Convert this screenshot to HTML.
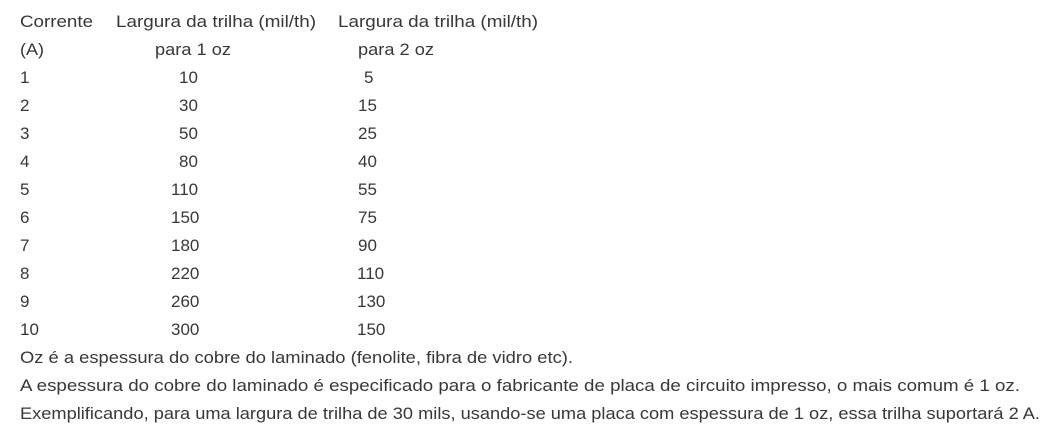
<!DOCTYPE html>
<html><head><meta charset="utf-8"><style>
html,body{margin:0;padding:0;background:#fff;width:1051px;height:434px;overflow:hidden}
body{position:relative;font-family:"Liberation Sans",sans-serif;font-size:17px;color:#383838}
span{position:absolute;white-space:nowrap;line-height:28px;transform-origin:0 50%;margin-top:2px}
</style></head><body>
<span style="left:20px;top:6px" data-w="73">Corrente</span>
<span style="left:116px;top:6px" data-w="200">Largura da trilha (mil/th)</span>
<span style="left:338px;top:6px" data-w="200">Largura da trilha (mil/th)</span>
<span style="left:20px;top:34px" data-w="24">(A)</span>
<span style="left:155px;top:34px" data-w="76">para 1 oz</span>
<span style="left:358px;top:34px" data-w="76">para 2 oz</span>

<span style="left:20px;top:62px">1</span><span style="left:179px;top:62px">10</span><span style="left:364px;top:62px">5</span>
<span style="left:20px;top:90px">2</span><span style="left:179px;top:90px">30</span><span style="left:358px;top:90px">15</span>
<span style="left:20px;top:118px">3</span><span style="left:179px;top:118px">50</span><span style="left:358px;top:118px">25</span>
<span style="left:20px;top:146px">4</span><span style="left:179px;top:146px">80</span><span style="left:358px;top:146px">40</span>
<span style="left:20px;top:174px">5</span><span style="left:171px;top:174px">110</span><span style="left:358px;top:174px">55</span>
<span style="left:20px;top:202px">6</span><span style="left:171px;top:202px">150</span><span style="left:358px;top:202px">75</span>
<span style="left:20px;top:230px">7</span><span style="left:171px;top:230px">180</span><span style="left:358px;top:230px">90</span>
<span style="left:20px;top:258px">8</span><span style="left:171px;top:258px">220</span><span style="left:357px;top:258px">110</span>
<span style="left:20px;top:286px">9</span><span style="left:171px;top:286px">260</span><span style="left:357px;top:286px">130</span>
<span style="left:20px;top:314px">10</span><span style="left:171px;top:314px">300</span><span style="left:357px;top:314px">150</span>

<span style="left:20px;top:342px" data-w="553">Oz é a espessura do cobre do laminado (fenolite, fibra de vidro etc).</span>
<span style="left:20px;top:370px" data-w="1000">A espessura do cobre do laminado é especificado para o fabricante de placa de circuito impresso, o mais comum é 1 oz.</span>
<span style="left:20px;top:398px" data-w="1020">Exemplificando, para uma largura de trilha de 30 mils, usando-se uma placa com espessura de 1 oz, essa trilha suportará 2 A.</span>
<script>
document.querySelectorAll('span').forEach(function(s){
  var w=s.getAttribute('data-w');
  if(w){var r=s.getBoundingClientRect().width; if(r>0) s.style.transform='scaleX('+(w/r)+')';}
});
</script>
</body></html>
